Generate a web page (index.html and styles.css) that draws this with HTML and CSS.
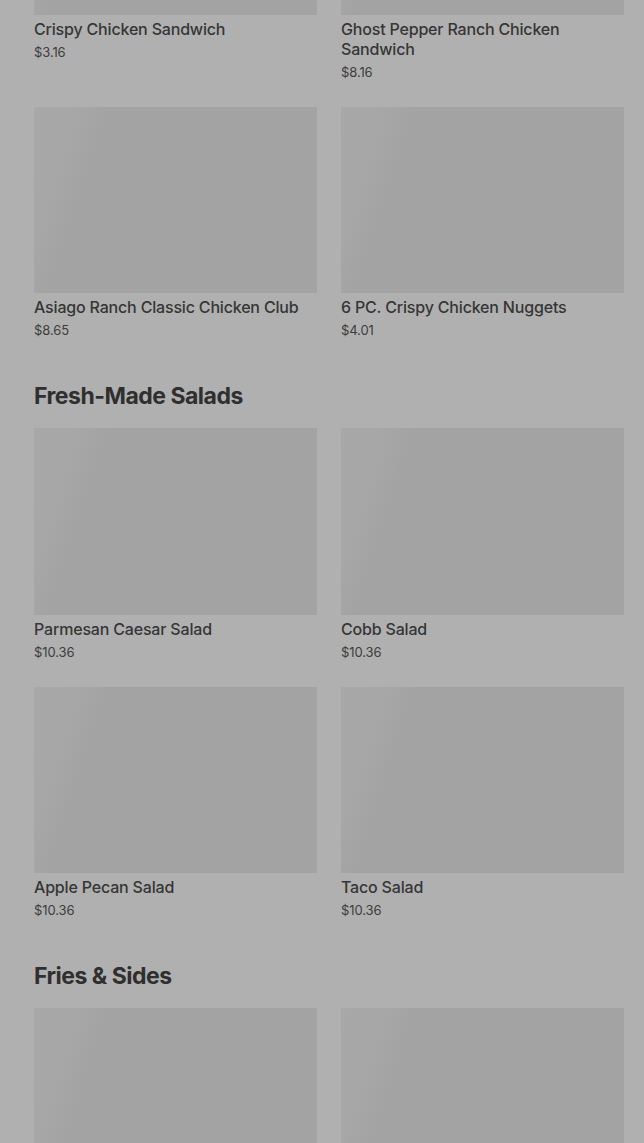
FILE: index.html
```html
<!DOCTYPE html>
<html lang="en">
<head>
<meta charset="utf-8">
<title>Menu</title>
<link rel="stylesheet" href="styles.css">
</head>
<body>
<main class="menu">
  <section class="category first">
    <div class="grid">
      <div class="card">
        <div class="thumb"></div>
        <div class="name">Crispy Chicken Sandwich</div>
        <div class="price">$3.16</div>
      </div>
      <div class="card">
        <div class="thumb"></div>
        <div class="name">Ghost Pepper Ranch Chicken Sandwich</div>
        <div class="price">$8.16</div>
      </div>
      <div class="card">
        <div class="thumb"></div>
        <div class="name">Asiago Ranch Classic Chicken Club</div>
        <div class="price">$8.65</div>
      </div>
      <div class="card">
        <div class="thumb"></div>
        <div class="name">6 PC. Crispy Chicken Nuggets</div>
        <div class="price">$4.01</div>
      </div>
    </div>
  </section>
  <section class="category">
    <h2 class="heading">Fresh-Made Salads</h2>
    <div class="grid">
      <div class="card">
        <div class="thumb"></div>
        <div class="name">Parmesan Caesar Salad</div>
        <div class="price">$10.36</div>
      </div>
      <div class="card">
        <div class="thumb"></div>
        <div class="name">Cobb Salad</div>
        <div class="price">$10.36</div>
      </div>
      <div class="card">
        <div class="thumb"></div>
        <div class="name">Apple Pecan Salad</div>
        <div class="price">$10.36</div>
      </div>
      <div class="card">
        <div class="thumb"></div>
        <div class="name">Taco Salad</div>
        <div class="price">$10.36</div>
      </div>
    </div>
  </section>
  <section class="category">
    <h2 class="heading">Fries &amp; Sides</h2>
    <div class="grid">
      <div class="card">
        <div class="thumb"></div>
      </div>
      <div class="card">
        <div class="thumb"></div>
      </div>
    </div>
  </section>
</main>
</body>
</html>
```
FILE: styles.css
```css
html, body {
  margin: 0;
  padding: 0;
  background: #b0b0b0;
  overflow: hidden;
}
body {
  font-family: Inter, "Liberation Sans", sans-serif;
  color: #333333;
}
.menu {
  padding: 0 20px 0 34px;
  margin-top: -172px;
}
.category {
  margin-bottom: 43px;
}
.grid {
  display: grid;
  grid-template-columns: 283px 283px;
  column-gap: 24px;
  row-gap: 26px;
}
.thumb {
  height: 186.5px;
  background: linear-gradient(108deg, #a8a8a8 0%, #a7a7a7 12%, #a3a3a3 22%, #a3a3a3 100%);
}
.name {
  margin-top: 4px;
  font-size: 16px;
  line-height: 20px;
  font-weight: 500;
  letter-spacing: -0.18px;
  color: #363636;
}
.price {
  margin-top: 4px;
  font-size: 13px;
  line-height: 18px;
  letter-spacing: -0.1px;
  color: #3d3d3d;
}
.heading {
  margin: 0 0 18px;
  font-size: 23px;
  line-height: 28px;
  font-weight: 700;
  color: #2f2f2f;
  letter-spacing: -0.5px;
}
```
